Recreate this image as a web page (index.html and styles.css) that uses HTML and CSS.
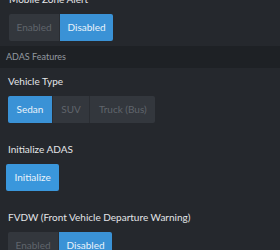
FILE: index.html
```html
<!DOCTYPE html>
<html>
    <head>
        <meta charset="UTF-8">
        <title>ADAS</title>
        <link rel="stylesheet" href="styles.css">
    </head>
    <body>
        <div class="group top">
            <div class="label">Mobile Zone Alert</div>
            <div class="btns">
                <span class="btn">Enabled</span>
                <span class="btn active">Disabled</span>
            </div>
        </div>
        <div class="section">ADAS Features</div>
        <div class="group first">
            <div class="label">Vehicle Type</div>
            <div class="btns wide">
                <span class="btn active">Sedan</span>
                <span class="btn">SUV</span>
                <span class="btn">Truck (Bus)</span>
            </div>
        </div>
        <div class="group">
            <div class="label">Initialize ADAS</div>
            <div class="btns wide">
                <span class="btn primary">Initialize</span>
            </div>
        </div>
        <div class="group">
            <div class="label">FVDW (Front Vehicle Departure Warning)</div>
            <div class="btns">
                <span class="btn">Enabled</span>
                <span class="btn active">Disabled</span>
            </div>
        </div>
    </body>
</html>
```

FILE: styles.css
```css
*{
    margin: 0;
    padding: 0;
    box-sizing: border-box;
}
body{
    background: #25282d;
    font-family: Lato, "Open Sans", sans-serif;
    color: #e6e8ea;
    overflow: hidden;
}
.group{
    padding: 19px 8px 0;
}
.group.first{
    padding-top: 6px;
}
.top{
    padding: 0 9px;
    margin-top: -8px;
}
.label{
    font-size: 10px;
    line-height: 14px;
    color: #e3e5e8;
}
.btns{
    display: flex;
    margin-top: 8px;
}
.btn{
    display: inline-block;
    height: 27px;
    line-height: 27px;
    padding: 0 7.5px;
    font-size: 10px;
    background: #33373d;
    color: #60656c;
    border-right: 1px solid #2a2d32;
}
.wide .btn{
    padding: 0 8.5px;
}
.btn:first-child{
    border-radius: 2px 0 0 2px;
}
.btn:last-child{
    border-radius: 0 2px 2px 0;
    border-right: 0;
}
.btn.active{
    background: #3a92d6;
    color: #e9f3fb;
}
.btn.primary{
    background: #3a97dc;
    color: #e9f3fb;
    border-radius: 2px;
    margin-left: -2px;
}
.section{
    background: #1e2125;
    height: 22px;
    line-height: 22px;
    padding-left: 6px;
    font-size: 9px;
    color: #9399a0;
    margin-top: 5px;
}
```
